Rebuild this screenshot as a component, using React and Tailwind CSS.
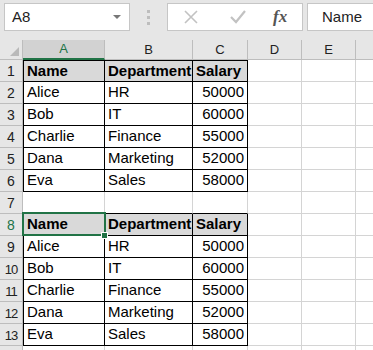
import React from 'react';

const cols = [
  { k: 'A', w: 'w-[82px]' },
  { k: 'B', w: 'w-[88px]' },
  { k: 'C', w: 'w-[55px]' },
  { k: 'D', w: 'w-[54px]' },
  { k: 'E', w: 'w-[54px]' },
  { k: 'F', w: 'w-[90px]' },
];

const people = [
  ['Alice', 'HR', 50000],
  ['Bob', 'IT', 60000],
  ['Charlie', 'Finance', 55000],
  ['Dana', 'Marketing', 52000],
  ['Eva', 'Sales', 58000],
];

function rowData(r) {
  if (r === 1 || r === 8) return ['Name', 'Department', 'Salary'];
  if (r >= 2 && r <= 6) return people[r - 2];
  if (r >= 9 && r <= 13) return people[r - 9];
  return null;
}

function Cell({ r, c, data }) {
  const inTable = data && c < 3;
  const header = r === 1 || r === 8;
  const aboveTable = r === 7 && c < 3;
  let cls = 'relative h-[22px] shrink-0 border-r border-b px-[3px] flex items-center text-[15px] whitespace-nowrap ' + cols[c].w;
  if (inTable) {
    cls += ' border-black';
    if (c === 0) cls += ' border-l';
    if (r === 1) cls += ' border-t';
    if (header) cls += ' font-bold bg-[#d9d9d9]';
    if (c === 2 && !header) cls += ' justify-end';
  } else if (aboveTable) {
    cls += ' border-r-[#d4d4d4] border-b-black';
  } else {
    cls += ' border-[#d4d4d4]';
  }
  const selected = r === 8 && c === 0;
  return (
    <div className={cls}>
      {inTable ? data[c] : null}
      {selected && (
        <>
          <div className="absolute z-10 -left-[2px] -top-[2px] -right-[2px] -bottom-[1px] border-2 border-[#217346]" />
          <div className="absolute z-20 -right-[4px] -bottom-[4px] w-[7px] h-[7px] bg-[#217346] border border-white" />
        </>
      )}
    </div>
  );
}

export default function App() {
  const rows = Array.from({ length: 14 }, (_, i) => i + 1);
  return (
    <div className="w-[373px] h-[350px] overflow-hidden bg-white text-black font-['Liberation_Sans',Arial,sans-serif]">
      {/* formula bar */}
      <div className="h-[40px] bg-[#e6e6e6] flex items-start pt-[3px]">
        <div className="ml-[4px] w-[126px] h-[28px] bg-white border border-[#c6c6c6] flex items-center pl-[7px] pr-[8px]">
          <span className="text-[15px] text-[#222]">A8</span>
          <svg className="ml-auto" width="8" height="5" viewBox="0 0 8 5">
            <path d="M0 0h8L4 4z" fill="#777" />
          </svg>
        </div>
        <div className="ml-[17px] mt-[7px] flex flex-col gap-[3px]">
          <div className="w-[3px] h-[3px] bg-[#bdbdbd]" />
          <div className="w-[3px] h-[3px] bg-[#bdbdbd]" />
          <div className="w-[3px] h-[3px] bg-[#bdbdbd]" />
        </div>
        <div className="ml-[17px] w-[136px] h-[28px] bg-white border border-[#c6c6c6] flex items-center">
          <svg className="ml-[16px]" width="14" height="14" viewBox="0 0 14 14">
            <path d="M1 1l12 12M13 1L1 13" stroke="#c2c2c2" strokeWidth="1.6" />
          </svg>
          <svg className="ml-[32px]" width="16" height="14" viewBox="0 0 16 14">
            <path d="M1 7l5 5L15 1" stroke="#c2c2c2" strokeWidth="2.2" fill="none" />
          </svg>
          <span className="ml-[27px] text-[17px] italic font-bold text-[#555] font-['Liberation_Serif',serif]">fx</span>
        </div>
        <div className="ml-[4px] flex-1 h-[28px] bg-white border border-[#c6c6c6] border-r-0 flex items-center pl-[14px]">
          <span className="text-[15px] text-[#222]">Name</span>
        </div>
      </div>

      {/* column headers */}
      <div className="flex h-[20px]">
        <div className="w-[23px] shrink-0 bg-[#e6e6e6] border-r border-b border-[#bdbdbd] flex items-end justify-end pr-[3px] pb-[3px]">
          <svg width="9" height="9" viewBox="0 0 9 9">
            <path d="M9 0V9H0z" fill="#b9b9b9" />
          </svg>
        </div>
        {cols.map((col, i) => (
          <div
            key={col.k}
            className={
              i === 0
                ? 'shrink-0 bg-[#d2d2d2] border-r border-[#bdbdbd] border-b-2 border-b-[#217346] flex items-center justify-center text-[13px] text-[#217346] ' + col.w
                : 'shrink-0 bg-[#e6e6e6] border-r border-b border-[#bdbdbd] flex items-center justify-center text-[13px] text-[#222] ' + col.w
            }
          >
            {i < 5 ? col.k : ''}
          </div>
        ))}
      </div>

      {/* rows */}
      {rows.map((r) => {
        const data = rowData(r);
        return (
          <div key={r} className="flex">
            <div
              className={
                r === 8
                  ? 'w-[23px] h-[22px] shrink-0 bg-[#e6e6e6] border-r border-b border-[#bdbdbd] flex items-center justify-center text-[14px] text-[#217346] pt-[2px]'
                  : r >= 10
                  ? 'w-[23px] h-[22px] shrink-0 bg-[#e6e6e6] border-r border-b border-[#bdbdbd] flex items-center justify-center text-[13px] tracking-[-1px] text-[#222] pt-[2px]'
                  : 'w-[23px] h-[22px] shrink-0 bg-[#e6e6e6] border-r border-b border-[#bdbdbd] flex items-center justify-center text-[14px] text-[#222] pt-[2px]'
              }
            >
              {r < 14 ? r : ''}
            </div>
            {cols.map((col, c) => (
              <Cell key={col.k} r={r} c={c} data={data} />
            ))}
          </div>
        );
      })}
    </div>
  );
}
